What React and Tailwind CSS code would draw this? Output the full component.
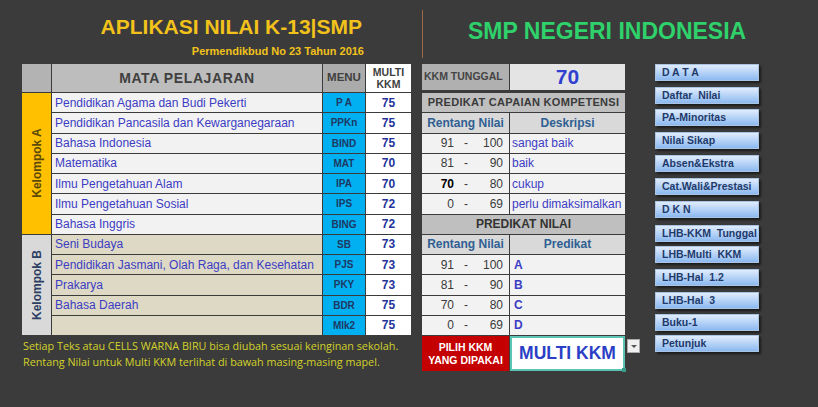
import React from 'react'

const A = [
  ['Pendidikan Agama dan Budi Pekerti', 'P A', 75],
  ['Pendidikan Pancasila dan Kewarganegaraan', 'PPKn', 75],
  ['Bahasa Indonesia', 'BIND', 75],
  ['Matematika', 'MAT', 70],
  ['Ilmu Pengetahuan Alam', 'IPA', 70],
  ['Ilmu Pengetahuan Sosial', 'IPS', 72],
  ['Bahasa Inggris', 'BING', 72],
]
const B = [
  ['Seni Budaya', 'SB', 73],
  ['Pendidikan Jasmani, Olah Raga, dan Kesehatan', 'PJS', 73],
  ['Prakarya', 'PKY', 73],
  ['Bahasa Daerah', 'BDR', 75],
  ['', 'Mlk2', 75],
]
const DESK = [
  [91, 100, 'sangat baik'],
  [81, 90, 'baik'],
  [70, 80, 'cukup', true],
  [0, 69, 'perlu dimaksimalkan'],
]
const PRED = [
  [91, 100, 'A'],
  [81, 90, 'B'],
  [70, 80, 'C'],
  [0, 69, 'D'],
]
const MENU = [
  'D A T A', 'Daftar  Nilai', 'PA-Minoritas', 'Nilai Sikap', 'Absen&Ekstra',
  'Cat.Wali&Prestasi', 'D K N', 'LHB-KKM  Tunggal', 'LHB-Multi  KKM',
  'LHB-Hal  1.2', 'LHB-Hal  3', 'Buku-1', 'Petunjuk',
]
const GAPS = [6, 5, 6, 6, 6, 6, 7, 4, 6, 6, 5, 4]

function Range({ lo, hi, bold }) {
  return (
    <div className="bg-[#f2f2f2] flex items-center text-[12px] text-[#3a3a3a]">
      <span className={`w-[32px] text-right ${bold ? 'font-bold text-black' : ''}`}>{lo}</span>
      <span className="w-[24px] text-center">-</span>
      <span className="w-[25px] text-right">{hi}</span>
    </div>
  )
}

export default function App() {
  const rows = 'grid-rows-[28px_repeat(12,19.25px)]'
  return (
    <div className="w-[818px] h-[407px] bg-[#3b3b3b] overflow-hidden" style={{ fontFamily: '"Liberation Sans", Arial, sans-serif' }}>
      {/* heading */}
      <div className="flex h-[64px]">
        <div className="w-[422px] flex flex-col items-end pr-[58px] pt-[16px]">
          <div className="text-[21px] font-bold text-[#f2c21b] leading-none pr-[2px]">APLIKASI NILAI K-13|SMP</div>
          <div className="text-[11px] font-bold text-[#f2c21b] leading-none mt-[9px]">Permendikbud No 23 Tahun 2016</div>
        </div>
        <div className="w-[1px] h-[48px] mt-[10px] bg-[#9a6a48]" />
        <div className="pl-[45px] pt-[20px] text-[23px] font-bold text-[#2fd16b] leading-none">SMP NEGERI INDONESIA</div>
      </div>

      <div className="flex pl-[22px]">
        <div className="flex flex-col">
          {/* main table */}
          <div className={`grid grid-cols-[29px_270px_42px_45px] ${rows} gap-[1px] bg-[#3b3b3b] w-[389px]`}>
            <div className="bg-[#b3b3b3]" />
            <div className="bg-[#bdbdbd] flex items-center justify-center text-[14px] font-bold text-[#404040] tracking-[0.6px]">MATA PELAJARAN</div>
            <div className="bg-[#ababab] flex items-center justify-center text-[11.5px] font-bold text-[#404040]">MENU</div>
            <div className="bg-white flex flex-col items-center justify-center text-[10.5px] font-bold text-[#404040] leading-[12px]">
              <span>MULTI</span><span>KKM</span>
            </div>

            <div className="row-span-7 bg-[#ffc000] flex items-center justify-center">
              <span className="-rotate-90 whitespace-nowrap text-[12px] font-bold text-[#5c4a08]">Kelompok A</span>
            </div>
            {A.map(([n, m, k], i) => (
              <React.Fragment key={'a' + i}>
                <div className="col-start-2 bg-[#f2f2f2] flex items-center pl-[3px] text-[12px] text-[#3c3cc4] whitespace-nowrap">{n}</div>
                <div className="bg-[#00b0f0] flex items-center justify-center text-[10px] font-bold text-[#1f3864]">{m}</div>
                <div className="bg-white flex items-center justify-center text-[12px] font-bold text-[#23339a]">{k}</div>
              </React.Fragment>
            ))}
            <div className="row-span-5 bg-[#d9d9d9] flex items-center justify-center">
              <span className="-rotate-90 whitespace-nowrap text-[12px] font-bold text-[#2c3e62]">Kelompok B</span>
            </div>
            {B.map(([n, m, k], i) => (
              <React.Fragment key={'b' + i}>
                <div className="col-start-2 bg-[#ddd9c4] flex items-center pl-[3px] text-[12px] text-[#3c3cc4] whitespace-nowrap">{n}</div>
                <div className="bg-[#00b0f0] flex items-center justify-center text-[10px] font-bold text-[#1f3864]">{m}</div>
                <div className="bg-white flex items-center justify-center text-[12px] font-bold text-[#23339a]">{k}</div>
              </React.Fragment>
            ))}
          </div>
          <div className="mt-[3px] text-[10.8px] leading-[16px] text-[#d2d22a] pl-[1px] whitespace-nowrap" style={{ fontFamily: '"Open Sans", sans-serif' }}>
            <div>Setiap Teks atau CELLS WARNA BIRU bisa diubah sesuai keinginan sekolah.</div>
            <div>Rentang Nilai untuk Multi KKM terlihat di bawah masing-masing mapel.</div>
          </div>
        </div>

        {/* predikat table */}
        <div className="ml-[11px] flex flex-col">
          <div className={`grid grid-cols-[87px_115px] ${rows} gap-[1px] bg-[#3b3b3b] w-[203px]`}>
            <div className="bg-[#b0b0b0] flex items-center pl-[2px] mb-[2px] text-[10.5px] font-bold text-[#444] whitespace-nowrap">KKM TUNGGAL</div>
            <div className="bg-[#e4e4e4] flex items-center justify-center mb-[2px] text-[21px] font-bold text-[#2f3fcf]">70</div>

            <div className="col-span-2 bg-[#bfbfbf] flex items-center justify-center text-[11px] font-bold text-[#3a3a3a] tracking-[0.3px]">PREDIKAT CAPAIAN KOMPETENSI</div>
            <div className="bg-[#d9d9d9] flex items-center justify-center text-[12px] font-bold text-[#2f5f92]">Rentang Nilai</div>
            <div className="bg-[#d9d9d9] flex items-center justify-center text-[12px] font-bold text-[#2f5f92]">Deskripsi</div>
            {DESK.map(([lo, hi, d, b], i) => (
              <React.Fragment key={'d' + i}>
                <Range lo={lo} hi={hi} bold={b} />
                <div className="bg-[#f2f2f2] flex items-center pl-[2px] text-[12px] text-[#3c3cc4] whitespace-nowrap">{d}</div>
              </React.Fragment>
            ))}
            <div className="col-span-2 bg-[#bfbfbf] flex items-center justify-center text-[12px] font-bold text-[#333]">PREDIKAT NILAI</div>
            <div className="bg-[#d9d9d9] flex items-center justify-center text-[12px] font-bold text-[#2f5f92]">Rentang Nilai</div>
            <div className="bg-[#d9d9d9] flex items-center justify-center text-[12px] font-bold text-[#2f5f92]">Predikat</div>
            {PRED.map(([lo, hi, p], i) => (
              <React.Fragment key={'p' + i}>
                <Range lo={lo} hi={hi} />
                <div className="bg-[#f2f2f2] flex items-center pl-[4px] text-[12px] font-bold text-[#3c3cc4]">{p}</div>
              </React.Fragment>
            ))}
          </div>
          <div className="flex mt-[1px]">
            <div className="w-[87px] h-[35px] bg-[#c40000] flex flex-col items-center justify-center text-[10.5px] font-bold text-white leading-[13px]">
              <span>PILIH KKM</span><span>YANG DIPAKAI</span>
            </div>
            <div className="relative ml-[1px] w-[115px] h-[35px] bg-white border-2 border-[#5cc4b4] flex items-center justify-center text-[17.5px] font-bold text-[#2b3fc6]">
              MULTI KKM
              <span className="absolute -right-[3px] -bottom-[3px] w-[4px] h-[4px] bg-[#3c9c8c]" />
              <span className="absolute -right-[17px] top-[1px] w-[13px] h-[14px] bg-[#f0f0f0] border border-[#aaa] flex items-center justify-center">
                <span className="w-0 h-0 border-l-[3px] border-r-[3px] border-t-[3px] border-l-transparent border-r-transparent border-t-[#555]" />
              </span>
            </div>
          </div>
        </div>

        {/* menu buttons */}
        <div className="ml-[30px] flex flex-col">
          {MENU.map((m, i) => (
            <div key={m} style={{ marginTop: i === 0 ? 0 : GAPS[i - 1] }}
              className="w-[104px] h-[17px] border border-[#a9c3e3] bg-gradient-to-b from-[#e0ecfc] to-[#8cb9f0] shadow-[2px_2px_2px_rgba(0,0,0,0.55)] flex items-center pl-[6px] text-[10.5px] font-bold text-[#1f3a6a] whitespace-pre">
              {m}
            </div>
          ))}
        </div>
      </div>
    </div>
  )
}
